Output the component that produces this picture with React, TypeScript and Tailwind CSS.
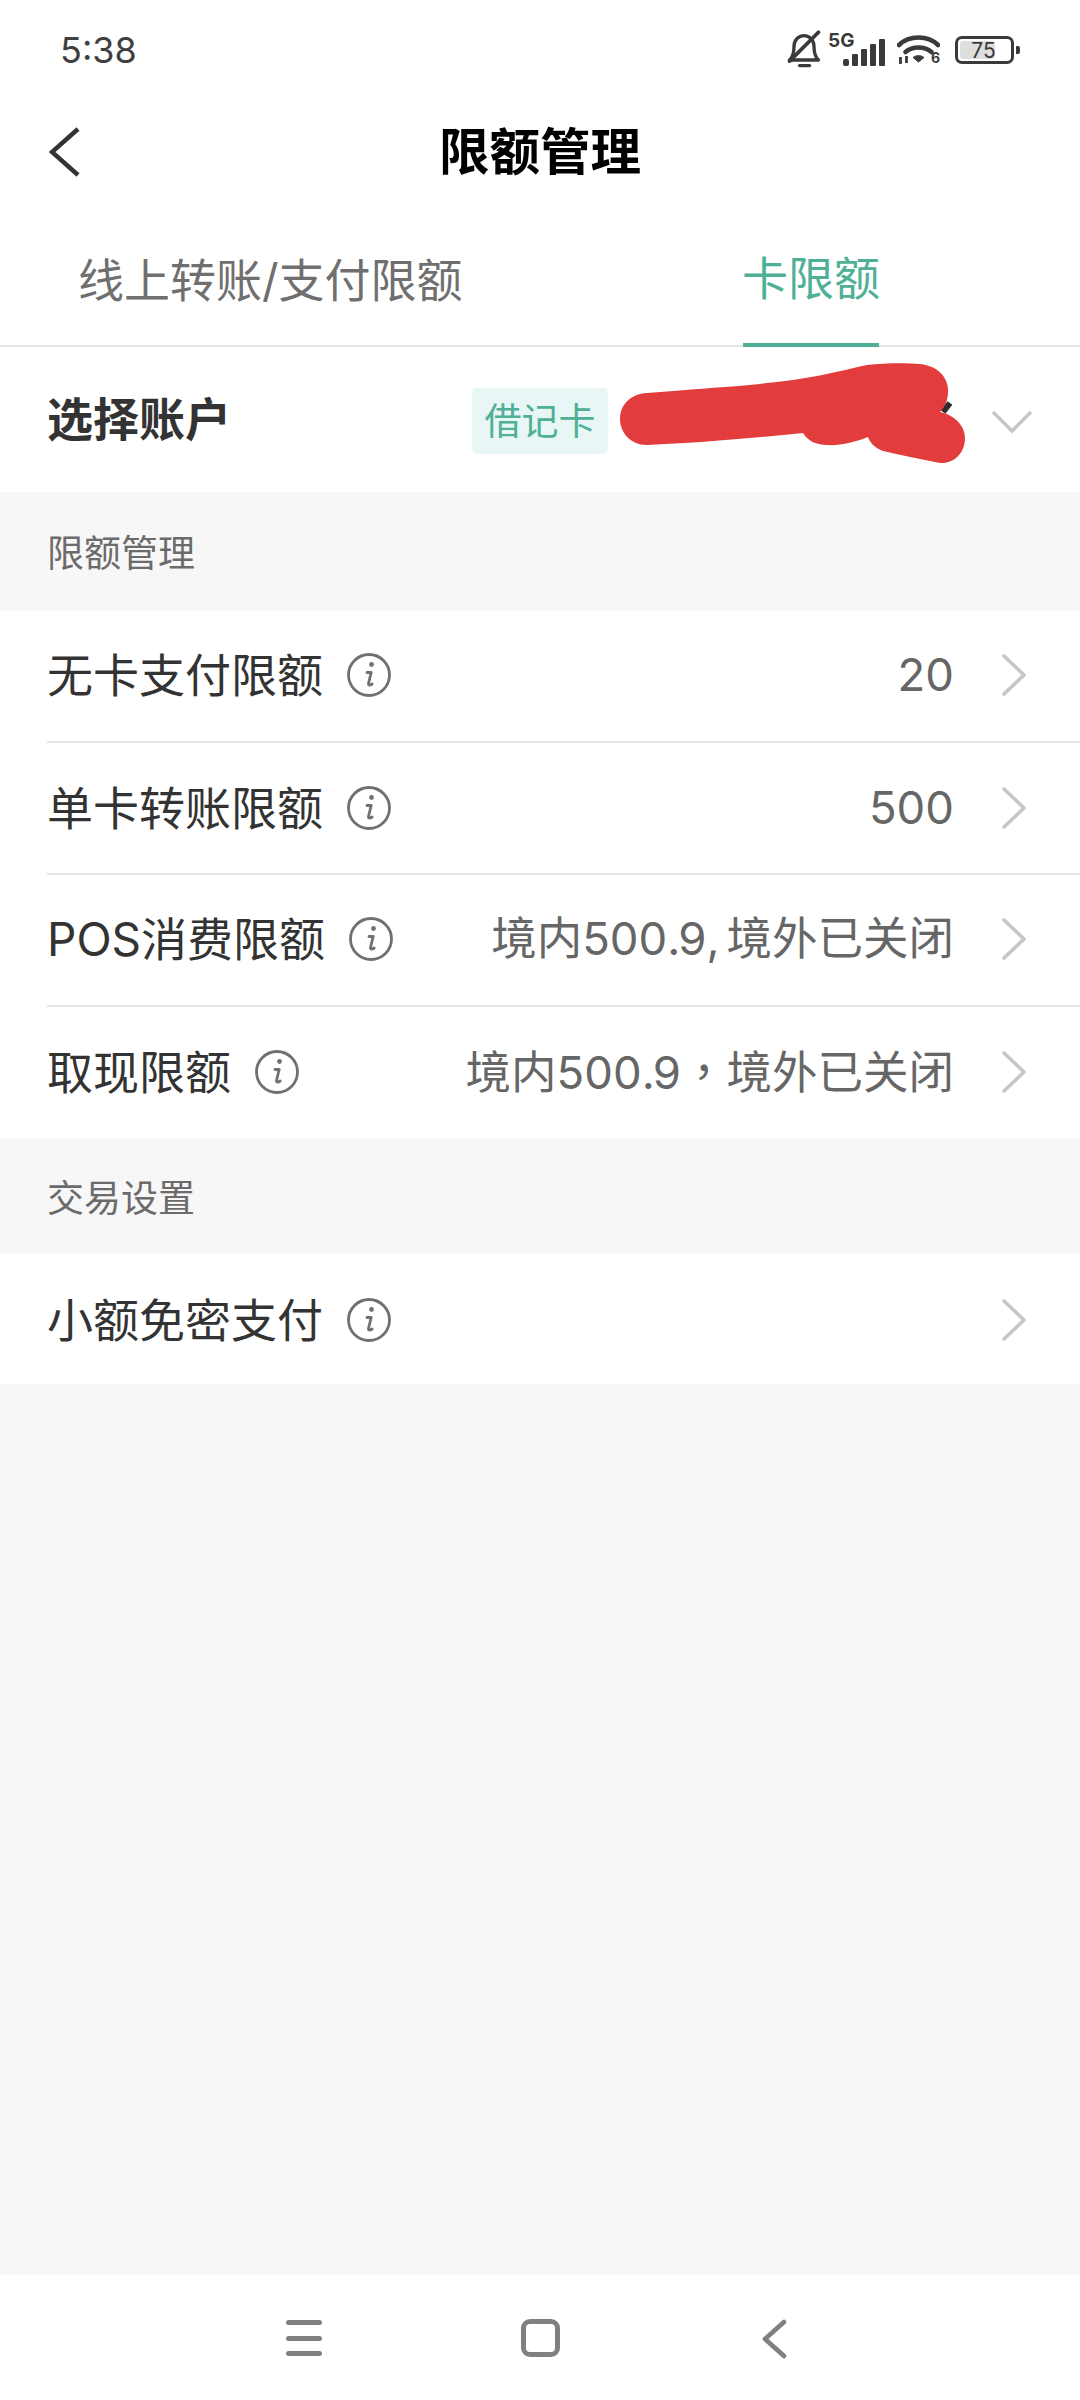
import React from "react";

const fontStack = "[font-family:Inter,'Noto_Sans_CJK_SC',sans-serif]";

const limitRows = [
  { label: "无卡支付限额", value: <>20</>, size: "h-[132px] pb-[3px]" },
  { label: "单卡转账限额", value: <>500</>, size: "h-[132px] pt-[1px] pb-[2px]" },
  {
    label: "POS消费限额",
    value: (
      <>
        境内500<span className="tracking-[-2px]">.</span>9<span className="tracking-[-3px]">, </span>境外已关闭
      </>
    ),
    size: "h-[132px] pb-[2px]",
  },
  {
    label: "取现限额",
    value: (
      <>
        境内500<span className="tracking-[-2px]">.</span>9
        <span className="[font-family:'Noto_Sans_CJK_TC',sans-serif]">，</span>境外已关闭
      </>
    ),
    size: "h-[131px] pb-[2px]",
  },
];

function InfoIcon() {
  return (
    <svg width="44" height="44" viewBox="0 0 44 44" fill="none" className="shrink-0">
      <circle cx="22" cy="22" r="20.5" stroke="#707070" strokeWidth="2.8" />
      <circle cx="24.5" cy="11.5" r="2.4" fill="#707070" />
      <path
        d="M20 19.5h4.2L21.6 30c-.5 2 .9 2.8 3.6 1"
        stroke="#707070"
        strokeWidth="2.8"
        strokeLinecap="round"
        strokeLinejoin="round"
      />
    </svg>
  );
}

function ChevronRight() {
  return (
    <svg width="26" height="42" viewBox="0 0 26 42" fill="none" className="shrink-0">
      <path d="M3 2l20 19L3 40" stroke="#c6c6c6" strokeWidth="3.6" strokeLinecap="round" strokeLinejoin="round" />
    </svg>
  );
}

function LimitRow({
  label,
  value,
  size,
  divider,
}: {
  label: string;
  value?: React.ReactNode;
  size: string;
  divider?: boolean;
}) {
  return (
    <div className="pl-[47px]">
      <div className={`flex items-center pr-[53px] ${size} ${divider ? "border-b-2 border-[#e6e6e6]" : ""}`}>
        <span className="text-[46px] leading-none text-[#333333]">{label}</span>
        <span className="ml-[24px]">
          <InfoIcon />
        </span>
        <span className="ml-auto text-[45.5px] leading-none whitespace-nowrap text-[#666666]">{value}</span>
        <span className="ml-[47px]">
          <ChevronRight />
        </span>
      </div>
    </div>
  );
}

function SectionTitle({ children, size }: { children: React.ReactNode; size: string }) {
  return (
    <div className={`flex items-center pt-[4px] pl-[47px] text-[37px] leading-none text-[#6b6b6b] ${size}`}>
      {children}
    </div>
  );
}

function StatusIcons() {
  return (
    <div className="flex items-center">
      {/* muted bell */}
      <svg width="40" height="40" viewBox="0 0 36 36" fill="none">
        <path
          d="M5 27c3-3 4-6 4-12 0-6 4-10 9-10s9 4 9 10c0 6 1 9 4 12H5z"
          stroke="#3a3a3a"
          strokeWidth="3"
          strokeLinejoin="round"
        />
        <path d="M14 32h9" stroke="#3a3a3a" strokeWidth="3" strokeLinecap="round" />
        <path d="M31 2L5 28" stroke="#3a3a3a" strokeWidth="3.4" strokeLinecap="round" />
      </svg>
      {/* 5G with signal bars */}
      <div className="relative ml-[4px] h-[32px] w-[57px]">
        <span className="absolute -top-[3px] left-0 text-[19px] leading-none font-bold text-[#3a3a3a]">5G</span>
        <svg width="42" height="27" viewBox="0 0 42 27" className="absolute right-0 bottom-0" fill="#3a3a3a">
          <rect x="0" y="20" width="6" height="7" rx="2" />
          <rect x="9" y="15" width="6" height="12" rx="1" />
          <rect x="18" y="10" width="6" height="17" rx="1" />
          <rect x="27" y="5" width="6" height="22" rx="1" />
          <rect x="36" y="0" width="6" height="27" rx="1" />
        </svg>
      </div>
      {/* wifi 6 */}
      <div className="relative ml-[12px] h-[30px] w-[43px]">
        <svg width="43" height="30" viewBox="0 0 43 30" fill="none">
          <path d="M2 10C12 0 31 0 41 10" stroke="#3a3a3a" strokeWidth="4.6" strokeLinecap="round" />
          <path d="M8.500 17c7-6 19-6 26 0" stroke="#3a3a3a" strokeWidth="4.6" strokeLinecap="round" />
          <path d="M16 22.500c3-2.500 8-2.500 11 0l-5.500 4.500z" fill="#3a3a3a" stroke="#3a3a3a" strokeWidth="1" strokeLinejoin="round" />
          <path d="M3.500 22v7M9.500 21v7" stroke="#3a3a3a" strokeWidth="2.800" />
        </svg>
        <span className="absolute right-0 bottom-0 text-[14px] leading-none font-bold text-[#3a3a3a]">6</span>
      </div>
      {/* battery */}
      <div className="ml-[15px] flex items-center">
        <div className="relative flex h-[28px] w-[59px] items-center justify-center overflow-hidden rounded-[7px] border-[3px] border-[#3a3a3a]">
          <div className="absolute top-[2px] bottom-[2px] left-[2px] w-[35px] rounded-[3px] bg-[#dedede]" />
          <span className="relative -ml-[2px] text-[21px] leading-none text-[#3a3a3a]">75</span>
        </div>
        <div className="ml-[2px] h-[8px] w-[4px] rounded-r-[2px] bg-[#3a3a3a]" />
      </div>
    </div>
  );
}

export default function App() {
  return (
    <div className={`flex h-[2400px] w-[1080px] flex-col overflow-hidden bg-[#f7f7f7] ${fontStack}`}>
      {/* status bar */}
      <div className="flex h-[100px] items-center justify-between bg-white pr-[60px] pl-[60px]">
        <span className="text-[36px] leading-none text-[#3f3f3f]">5:38</span>
        <StatusIcons />
      </div>

      {/* title bar */}
      <div className="relative flex h-[104px] items-center justify-center bg-white">
        <svg width="32" height="50" viewBox="0 0 32 50" fill="none" className="absolute top-[27px] left-[49px]">
          <path d="M29 2L3 25l26 23" stroke="#333333" strokeWidth="4.5" />
        </svg>
        <h1 className="text-[50.5px] leading-none font-bold text-black">限额管理</h1>
      </div>

      {/* tabs */}
      <div className="flex h-[143px] border-b-2 border-[#e5e5e5] bg-white pl-[78px]">
        <div className="flex h-[141px] items-center pt-[10px] text-[46px] leading-none text-[#6f6f6f]">
          线上转账/支付限额
        </div>
        <div className="ml-auto mr-[201px] flex h-[143px] w-[136px] items-center justify-center border-b-[4px] border-[#4fb095] pt-[8px] text-[46px] leading-none whitespace-nowrap text-[#4fb095]">
          卡限额
        </div>
      </div>

      {/* account selector */}
      <div className="relative flex h-[145px] items-center bg-white pr-[47px] pl-[47px]">
        <span className="-mt-[2px] text-[46px] leading-none font-bold text-[#333333]">选择账户</span>
        <span className="mt-[3px] ml-auto flex h-[66px] w-[136px] items-center justify-center rounded-[5px] bg-[#e8f6f5] text-[37px] leading-none text-[#4fb095]">
          借记卡
        </span>
        <svg width="42" height="24" viewBox="0 0 42 24" fill="none" className="mt-[5px] ml-[383px]">
          <path d="M2 2l19 19L40 2" stroke="#c6c6c6" strokeWidth="3.400" />
        </svg>
        {/* marker scribble over the card number */}
        <svg width="360" height="110" viewBox="0 0 360 110" className="absolute top-[15px] left-[615px]">
          <path d="M328 50l7-9" stroke="#2c2c2c" strokeWidth="6" />
          <path
            d="M32 31C90 26 130 24 152 21 190 18 225 9 252 3 270 1 290 1 305 2 325 4 334 18 333 30 333 38 330 45 325 50 340 53 350 64 350 76 350 92 338 102 325 101 305 97 285 93 268 89 260 86 255 81 253 75 240 80 225 84 212 83 200 83 192 78 188 71 140 76 80 81 32 83 15 83 5 70 5 57 5 43 15 32 32 31Z"
            fill="#e23d3c"
          />
        </svg>
      </div>

      <SectionTitle size="h-[119px]">限额管理</SectionTitle>

      <div className="bg-white">
        {limitRows.map((row, i) => (
          <LimitRow
            key={row.label}
            label={row.label}
            value={row.value}
            size={row.size}
            divider={i < limitRows.length - 1}
          />
        ))}
      </div>

      <SectionTitle size="h-[116px]">交易设置</SectionTitle>

      <div className="bg-white">
        <LimitRow label="小额免密支付" size="h-[130px] pt-[1px]" />
      </div>

      <div className="flex-1" />

      {/* system navigation */}
      <div className="flex h-[125px] items-start bg-white pt-[44px]">
        <div className="ml-[286px] flex h-[38px] w-[36px] flex-col justify-between py-[1px]">
          <div className="h-[5px] rounded-full bg-[#808080]" />
          <div className="h-[5px] rounded-full bg-[#808080]" />
          <div className="h-[5px] rounded-full bg-[#808080]" />
        </div>
        <div className="ml-[199px] h-[38px] w-[39px] rounded-[9px] border-[5px] border-[#808080]" />
        <svg width="26" height="40" viewBox="0 0 26 40" fill="none" className="ml-[201px]">
          <path d="M23 3L4 20l19 17" stroke="#808080" strokeWidth="4.600" strokeLinecap="round" strokeLinejoin="round" />
        </svg>
      </div>
    </div>
  );
}
